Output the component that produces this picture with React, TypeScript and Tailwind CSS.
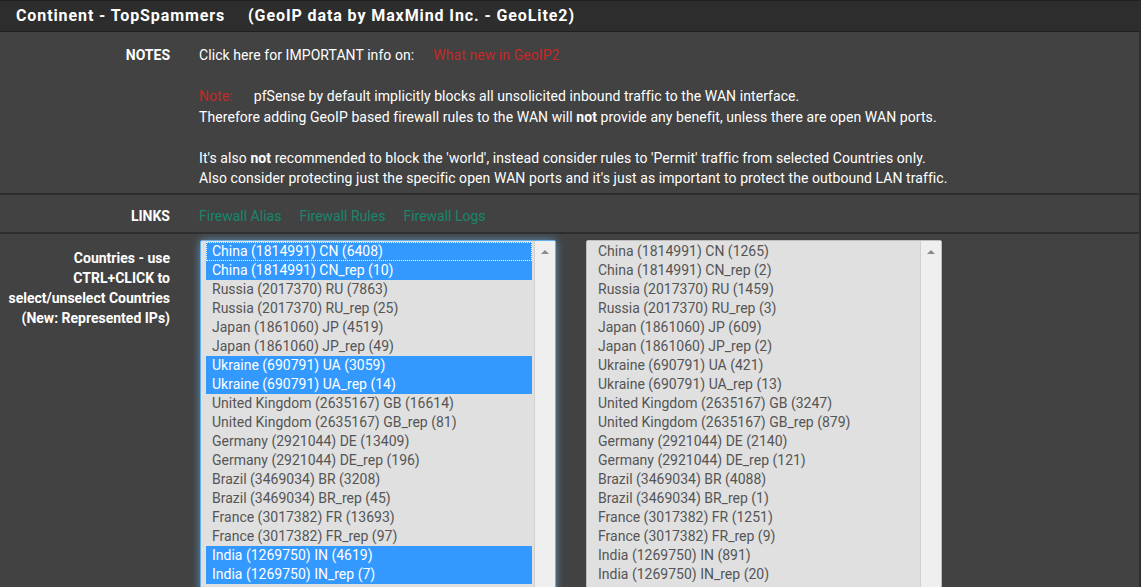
import React from 'react'

type Opt = { label: string; sel?: boolean }

const left: Opt[] = [
  { label: 'China (1814991) CN (6408)', sel: true },
  { label: 'China (1814991) CN_rep (10)', sel: true },
  { label: 'Russia (2017370) RU (7863)' },
  { label: 'Russia (2017370) RU_rep (25)' },
  { label: 'Japan (1861060) JP (4519)' },
  { label: 'Japan (1861060) JP_rep (49)' },
  { label: 'Ukraine (690791) UA (3059)', sel: true },
  { label: 'Ukraine (690791) UA_rep (14)', sel: true },
  { label: 'United Kingdom (2635167) GB (16614)' },
  { label: 'United Kingdom (2635167) GB_rep (81)' },
  { label: 'Germany (2921044) DE (13409)' },
  { label: 'Germany (2921044) DE_rep (196)' },
  { label: 'Brazil (3469034) BR (3208)' },
  { label: 'Brazil (3469034) BR_rep (45)' },
  { label: 'France (3017382) FR (13693)' },
  { label: 'France (3017382) FR_rep (97)' },
  { label: 'India (1269750) IN (4619)', sel: true },
  { label: 'India (1269750) IN_rep (7)', sel: true },
]

const right: Opt[] = [
  { label: 'China (1814991) CN (1265)' },
  { label: 'China (1814991) CN_rep (2)' },
  { label: 'Russia (2017370) RU (1459)' },
  { label: 'Russia (2017370) RU_rep (3)' },
  { label: 'Japan (1861060) JP (609)' },
  { label: 'Japan (1861060) JP_rep (2)' },
  { label: 'Ukraine (690791) UA (421)' },
  { label: 'Ukraine (690791) UA_rep (13)' },
  { label: 'United Kingdom (2635167) GB (3247)' },
  { label: 'United Kingdom (2635167) GB_rep (879)' },
  { label: 'Germany (2921044) DE (2140)' },
  { label: 'Germany (2921044) DE_rep (121)' },
  { label: 'Brazil (3469034) BR (4088)' },
  { label: 'Brazil (3469034) BR_rep (1)' },
  { label: 'France (3017382) FR (1251)' },
  { label: 'France (3017382) FR_rep (9)' },
  { label: 'India (1269750) IN (891)' },
  { label: 'India (1269750) IN_rep (20)' },
]

function ListBox({ items, focused }: { items: Opt[]; focused?: boolean }) {
  return (
    <div
      className={
        'flex h-[360px] w-[356px] overflow-hidden rounded-[2px] border bg-[#e0e0e0] ' +
        (focused
          ? 'border-[#66afe9] shadow-[0_0_8px_rgba(102,175,233,0.7)]'
          : 'border-[#bdbdbd]')
      }
    >
      <div className="flex-1 pl-[5px] pr-[2px] pt-[1px]">
        {items.map((o, i) => (
          <div
            key={i}
            className={
              'h-[19px] whitespace-nowrap pl-[6px] text-[14px] leading-[19px] ' +
              (o.sel ? 'bg-[#3399ff] text-white' : 'text-[#555555]') +
              (focused && i === 0 ? ' outline-1 outline-dotted outline-white -outline-offset-1' : '')
            }
          >
            {o.label}
          </div>
        ))}
      </div>
      <div className="flex w-[21px] justify-center border-l border-[#d0d0d0] bg-[#efefef] pt-[9px]">
        <div className="h-0 w-0 border-x-[4px] border-b-[4px] border-x-transparent border-b-[#8a8a8a]" />
      </div>
    </div>
  )
}

export default function App() {
  return (
    <div className="h-[587px] overflow-hidden border-r-2 border-[#2e2e2e] bg-[#424242] font-['Roboto',sans-serif] text-white">
      <div className="flex h-[32px] items-center border-y border-[#1e1e1e] bg-[#2d2d2d] pl-[16px] text-[16px] font-bold tracking-[0.9px]">
        <span>Continent - TopSpammers</span>
        <span className="ml-[23px]">(GeoIP data by MaxMind Inc. - GeoLite2)</span>
      </div>

      <div className="grid grid-cols-[170px_1fr] gap-x-[29px] border-b-2 border-[#2e2e2e] pb-[4px] pt-[13px]">
        <div className="text-right text-[14px] font-bold leading-[20px]">NOTES</div>
        <div className="text-[14px] leading-[20.5px] tracking-[0.07px]">
          <div>
            Click here for IMPORTANT info on:
            <span className="ml-[19px] text-[#c62828]">What new in GeoIP2</span>
          </div>
          <div className="h-[20.5px]" />
          <div>
            <span className="text-[#c62828]">Note:</span>
            <span className="ml-[21px]">pfSense by default implicitly blocks all unsolicited inbound traffic to the WAN interface.</span>
          </div>
          <div>
            Therefore adding GeoIP based firewall rules to the WAN will <b>not</b> provide any benefit, unless there are open WAN ports.
          </div>
          <div className="h-[20.5px]" />
          <div>
            It's also <b>not</b> recommended to block the 'world', instead consider rules to 'Permit' traffic from selected Countries only.
          </div>
          <div>
            Also consider protecting just the specific open WAN ports and it's just as important to protect the outbound LAN traffic.
          </div>
        </div>
      </div>

      <div className="grid h-[39px] grid-cols-[170px_1fr] items-center gap-x-[29px] border-b-2 border-[#2e2e2e] pt-[7px]">
        <div className="text-right text-[14px] font-bold">LINKS</div>
        <div className="flex gap-[18px] text-[14px] text-[#17866c]">
          <span>Firewall Alias</span>
          <span>Firewall Rules</span>
          <span>Firewall Logs</span>
        </div>
      </div>

      <div className="grid grid-cols-[170px_1fr] gap-x-[29px] pt-[6px]">
        <div className="pt-[8px] text-right text-[14px] font-bold leading-[20px]">
          Countries - use
          <br />
          CTRL+CLICK to
          <br />
          select/unselect Countries
          <br />
          (New: Represented IPs)
        </div>
        <div className="flex gap-[30px] pl-px">
          <ListBox items={left} focused />
          <ListBox items={right} />
        </div>
      </div>
    </div>
  )
}
